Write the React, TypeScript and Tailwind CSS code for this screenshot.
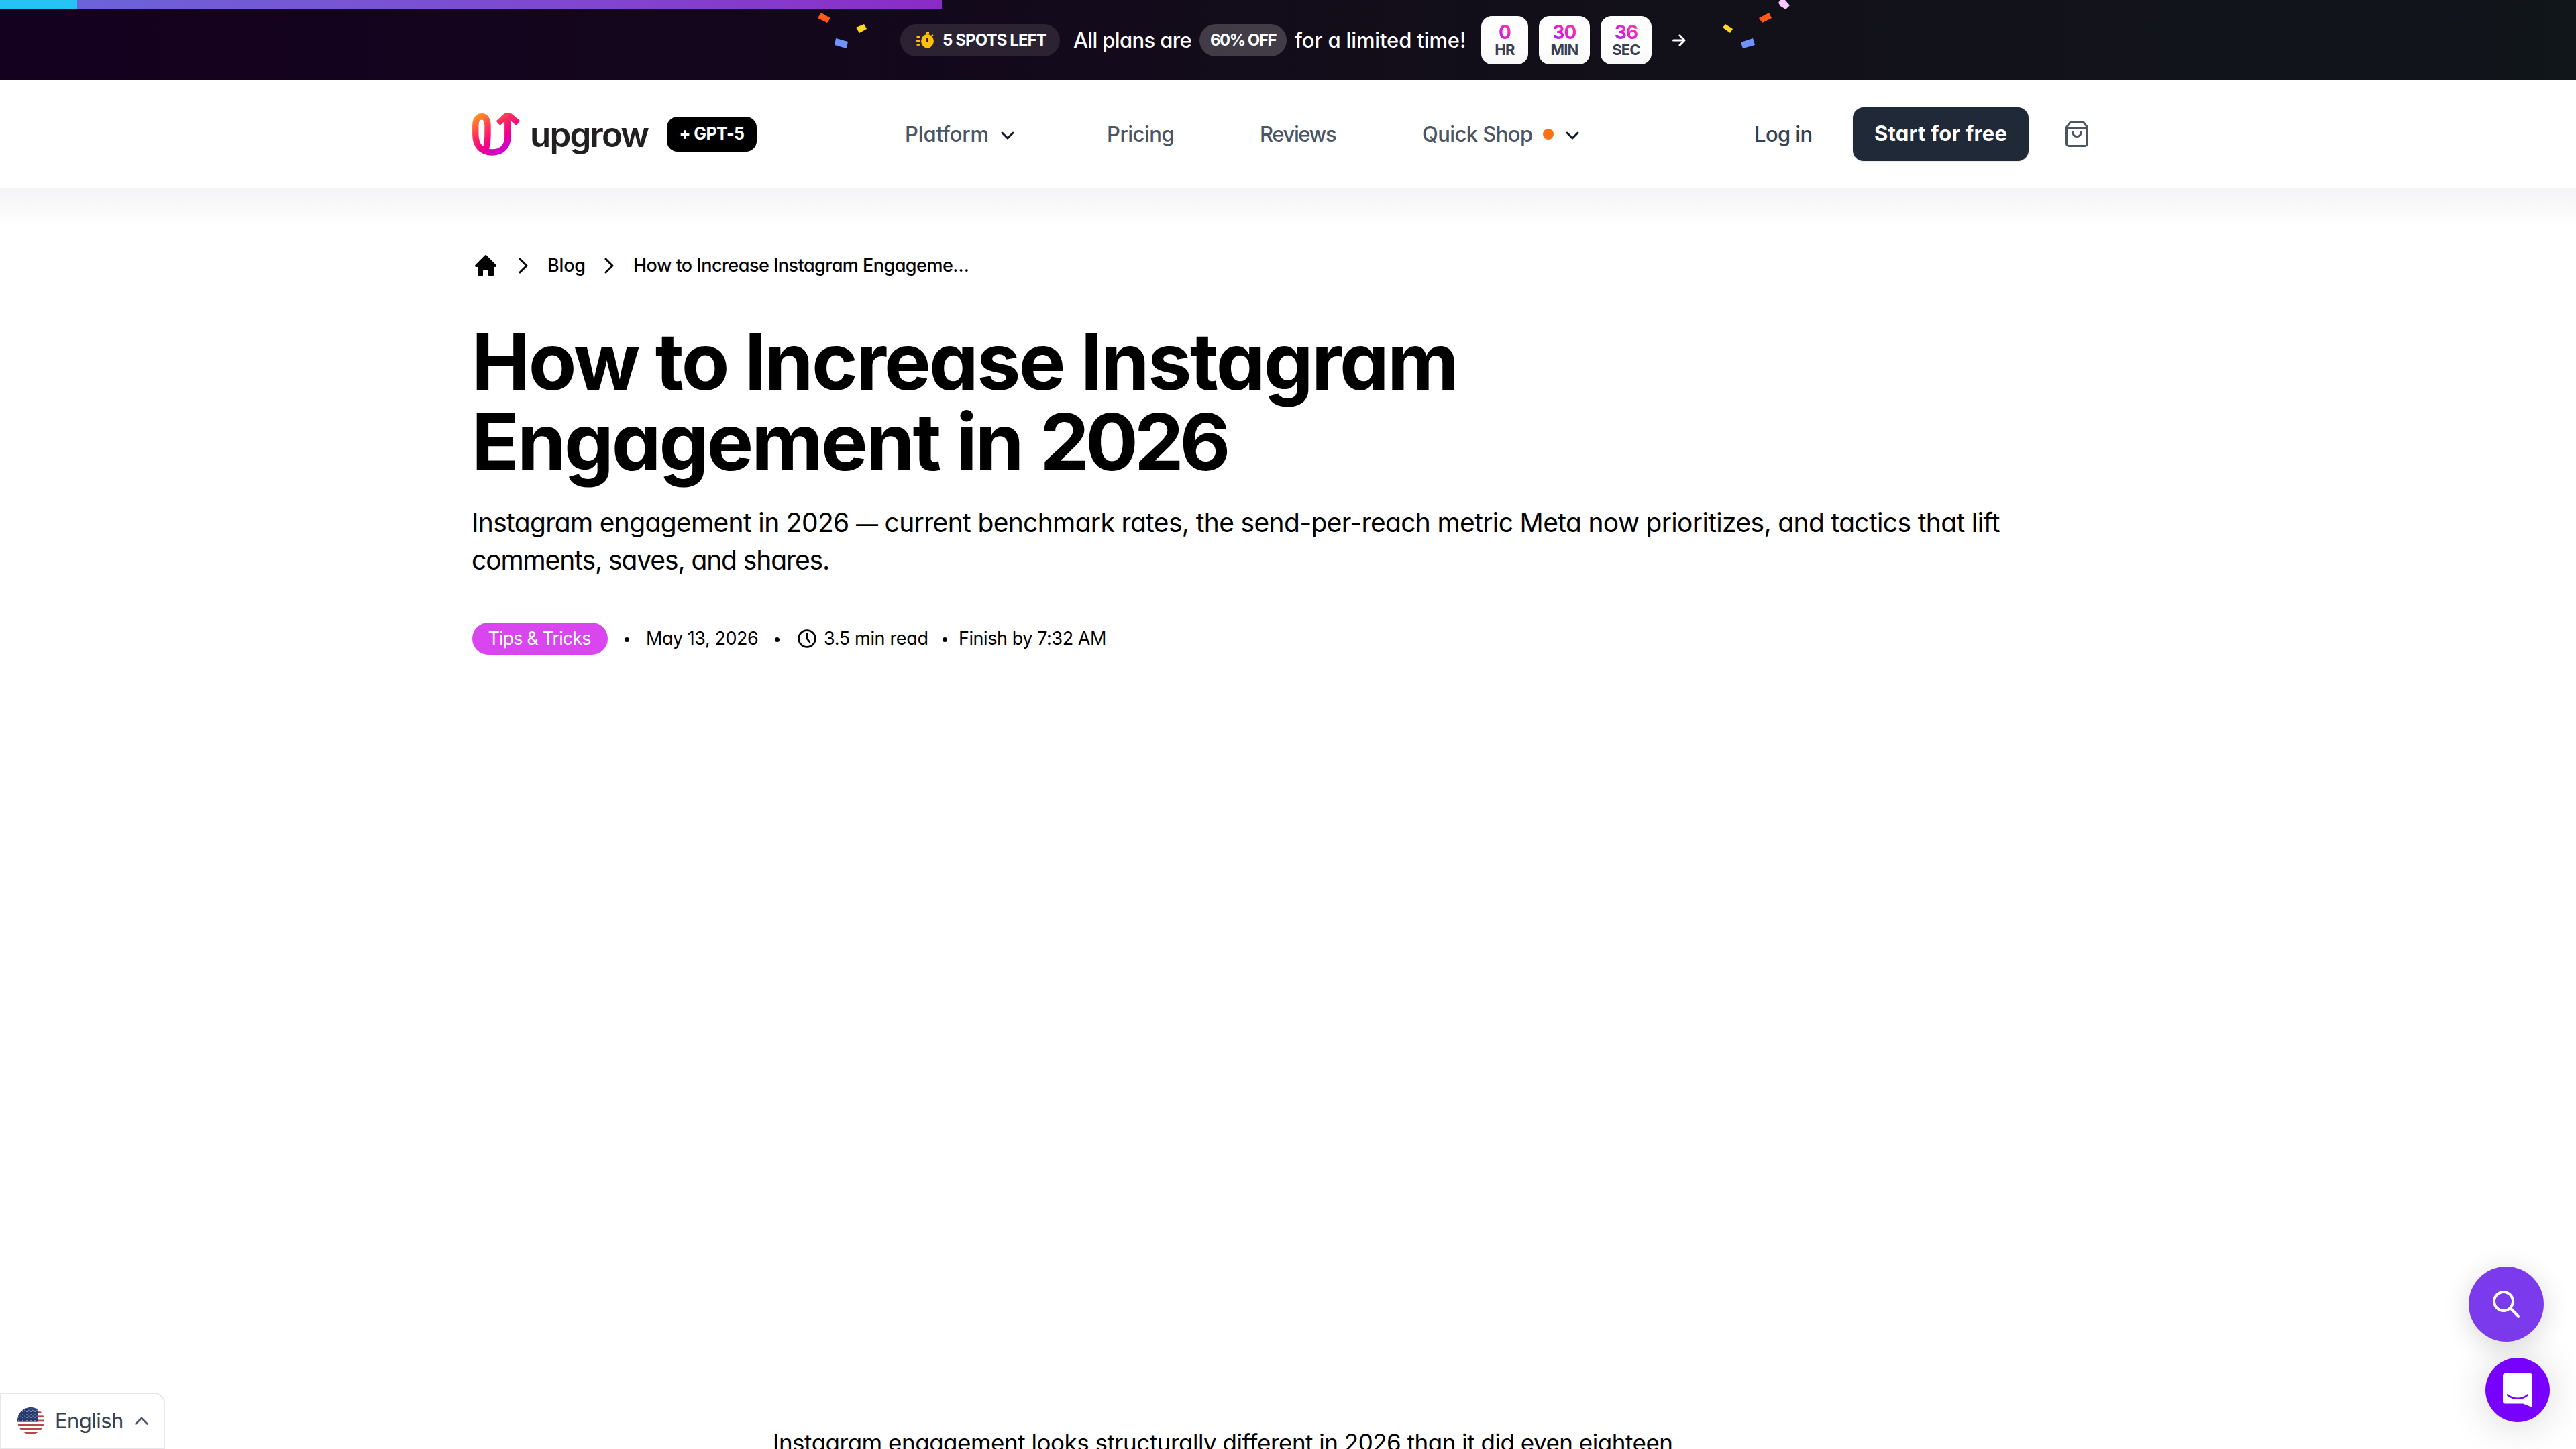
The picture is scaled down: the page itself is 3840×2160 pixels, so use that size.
import { clsx } from 'clsx';

interface ChevronProps {
  className?: string;
}

const COUNTDOWN = [
  { value: '0', label: 'HR', box: 'w-[70px]' },
  { value: '30', label: 'MIN', box: 'w-[76px]' },
  { value: '36', label: 'SEC', box: 'w-[76px]' },
];

/* Confetti pieces scattered on both sides of the promo text */
const CONFETTI = [
  { points: '1224,19 1238,27 1233,34 1219,27', color: '#ff5a1a' },
  { points: '1276,41 1288,36 1292,43 1281,49', color: '#ffd91f' },
  { points: '1246,57 1264,62 1262,72 1244,67', color: '#6f93ff' },
  { points: '2627,34 2641,27 2637,19 2622,27', color: '#ff5a1a' },
  { points: '2568,41 2572,36 2583,43 2579,49', color: '#ffd91f' },
  { points: '2595,63 2613,57 2616,67 2598,72', color: '#6f93ff' },
  { points: '2651,4 2654,0 2661,0 2668,8 2662,14 2654,9', color: '#fbc8ff' },
];

function ChevronDown({ className }: ChevronProps) {
  return (
    <svg viewBox="0 0 20 12" className={clsx('h-3 w-5 shrink-0', className)} fill="none" stroke="#111827" strokeWidth="3" strokeLinecap="round" strokeLinejoin="round">
      <path d="M2 2l8 8 8-8" />
    </svg>
  );
}

function ChevronRight() {
  return (
    <svg viewBox="0 0 14 24" className="h-6 w-3.5 shrink-0" fill="none" stroke="black" strokeWidth="3" strokeLinecap="round" strokeLinejoin="round">
      <path d="M2 2l10 10L2 22" />
    </svg>
  );
}

function StopwatchIcon() {
  return (
    <svg viewBox="0 0 28 24" className="h-6 w-7 shrink-0">
      <g fill="#fcbf08">
        <rect x="15" y="0" width="5" height="3" />
        <path d="M22.5 5.5l2.5-2.6 1.6 1.6-2.2 2.5z" />
        <ellipse cx="17.5" cy="13.3" rx="9.4" ry="10.2" />
        <rect x="1.5" y="6" width="5" height="2.8" />
        <rect x="0" y="11.5" width="6" height="2.8" />
        <rect x="1.5" y="17" width="5" height="2.8" />
      </g>
      <rect x="16.1" y="8" width="2.6" height="6.5" fill="#2b1f33" />
    </svg>
  );
}

function LogoMark() {
  return (
    <svg viewBox="0 0 72 64" className="h-16 w-[72px] shrink-0" fill="none">
      <defs>
        <linearGradient id="logo" gradientUnits="userSpaceOnUse" x1="6" y1="2" x2="44" y2="62">
          <stop offset="0" stopColor="#ff9c1a" />
          <stop offset="0.4" stopColor="#ff2d5e" />
          <stop offset="0.68" stopColor="#f0008a" />
          <stop offset="1" stopColor="#c800e0" />
        </linearGradient>
      </defs>
      <g stroke="url(#logo)" strokeWidth="9.4">
        <path d="M19 58C22 50 23 42 23 32V19C23 10.5 19.5 5.8 14 5.8C8.5 5.8 4.8 10.5 4.8 19V32C4.8 47 12 59 30 59C46 59 52.8 48 52.8 36V5" />
        <path d="M38.5 15.7L50 5.2Q53 3.6 56 5.2L68.4 15.7" strokeWidth="8.8" />
      </g>
    </svg>
  );
}

function HomeIcon() {
  return (
    <svg viewBox="0 0 32 32" className="h-8 w-8 shrink-0" fill="black">
      <path d="M14.6.7a2 2 0 0 1 2.8 0l14 14a2 2 0 0 1-1.4 3.4h-2V30a2 2 0 0 1-2 2h-4a2 2 0 0 1-2-2v-6a2 2 0 0 0-2-2h-4a2 2 0 0 0-2 2v6a2 2 0 0 1-2 2H6a2 2 0 0 1-2-2V18.1H2A2 2 0 0 1 .6 14.7z" />
    </svg>
  );
}

function BagIcon() {
  return (
    <svg viewBox="0 0 36 40" className="h-10 w-9 shrink-0" fill="none" stroke="#4b5563" strokeWidth="3" strokeLinecap="round" strokeLinejoin="round">
      <path d="M8 2.5h20l5.5 7V34a3.5 3.5 0 0 1-3.5 3.5H6A3.5 3.5 0 0 1 2.5 34V9.5z" />
      <path d="M2.5 10.5h31M11.5 16.5a6.5 7 0 0 0 13 0" />
    </svg>
  );
}

function ClockIcon() {
  return (
    <svg viewBox="0 0 28 28" className="h-7 w-7 shrink-0" fill="none" stroke="black" strokeWidth="2.6" strokeLinecap="round">
      <circle cx="14" cy="14" r="12.4" />
      <path d="M14 7v7l4 5" />
    </svg>
  );
}

function UsFlag() {
  const stripes = Array.from({ length: 13 }, (_, i) => i);
  const stars = Array.from({ length: 45 }, (_, i) => i);
  return (
    <svg viewBox="0 0 40 40" className="h-10 w-10 shrink-0 rounded-full">
      {stripes.map((i) => (
        <rect key={i} y={i * 3.08} width="40" height="3.1" fill={i % 2 ? '#ffffff' : '#b0484f'} />
      ))}
      <rect width="30.5" height="21.5" fill="#25396f" />
      {stars.map((i) => (
        <circle key={i} cx={2 + (i % 5) * 6 + (Math.floor(i / 5) % 2) * 3} cy={2 + Math.floor(i / 5) * 2.2} r="0.6" fill="#dfe4f2" />
      ))}
    </svg>
  );
}

function PromoBanner() {
  return (
    <div className="relative h-[120px] overflow-hidden bg-gradient-to-r from-[#14001f] via-[#120f19] via-60% to-[#11161b]">
      <svg viewBox="0 0 3840 120" className="absolute inset-0 h-[120px] w-[3840px]">
        {CONFETTI.map((piece) => (
          <polygon key={piece.points} points={piece.points} fill={piece.color} />
        ))}
      </svg>

      {/* Reading progress */}
      <div className="absolute top-0 left-0 flex h-3.5 w-[1404px]">
        <div className="w-[115px] bg-[#25c4f5]" />
        <div className="flex-1 bg-gradient-to-r from-[#6b63d9] to-[#8a2bc6]" />
      </div>

      <div className="relative flex h-[120px] items-center pl-[1342px] text-[31px] font-medium whitespace-nowrap text-white">
        <div className="flex h-12 w-[238px] items-center rounded-full bg-white/10 pl-[23px] text-2xl font-bold tracking-[-0.9px]">
          <StopwatchIcon />
          <span className="ml-3">5 SPOTS LEFT</span>
        </div>
        <span className="ml-5 w-[188px] tracking-[-0.64px]">All plans are</span>
        <span className="h-12 w-[130px] rounded-full bg-white/20 pl-4 text-2xl leading-12 font-bold tracking-[-1.5px]">60% OFF</span>
        <span className="ml-3 w-[278px] tracking-[-0.13px]">for a limited time!</span>
        <div className="flex gap-4">
          {COUNTDOWN.map((unit) => (
            <div key={unit.label} className={clsx('flex h-[72px] flex-col items-center rounded-2xl bg-gradient-to-b from-white from-60% to-[#f7f7f8] pt-[10px] font-bold', unit.box)}>
              <span className="bg-gradient-to-tr from-[#8a12f5] via-[#e516d8] via-45% to-[#ff3a8c] bg-clip-text px-0.5 text-[28px] leading-[28px] tracking-[-1px] text-transparent">{unit.value}</span>
              <span className="text-[22px] leading-[25px] tracking-[-0.8px] text-[#374151]">{unit.label}</span>
            </div>
          ))}
        </div>
        <svg viewBox="0 0 20 18" className="ml-[31px] h-[18px] w-5" fill="none" stroke="white" strokeWidth="3" strokeLinecap="round" strokeLinejoin="round">
          <path d="M1.5 9h16M11 1.8L18 9l-7 7.2" />
        </svg>
      </div>
    </div>
  );
}

function NavBar() {
  return (
    <header className="flex h-40 items-center bg-white px-[704px] text-[31px] font-medium whitespace-nowrap text-[#4b5563]">
      <LogoMark />
      <span className="ml-[14px] w-[204px] text-[51px] leading-none font-semibold tracking-[-1.8px] text-[#211f20]">upgrow</span>
      <span className="h-[52px] w-[134px] rounded-2xl bg-black text-center text-[25px] leading-[50px] font-bold tracking-[-0.57px] text-white">+ GPT-5</span>

      <nav className="ml-[221px] flex items-center">
        <a className="flex w-[301px] items-center">
          <span className="w-[143px] tracking-[-0.16px]">Platform</span>
          <ChevronDown className="mt-1" />
        </a>
        <a className="w-[228px] tracking-[-0.49px]">Pricing</a>
        <a className="w-[242px] tracking-[-1.4px]">Reviews</a>
        <a className="flex w-[495px] items-center">
          <span className="w-[180px] tracking-[-0.58px]">Quick Shop</span>
          <span className="h-4 w-4 rounded-full bg-[#f97316]" />
          <ChevronDown className="mt-1 ml-[18px]" />
        </a>
      </nav>

      <a className="w-[147px] tracking-[-0.61px] text-[#374151]">Log in</a>
      <button className="h-20 w-[262px] shrink-0 rounded-2xl bg-[#1f2937] pb-0.5 text-center font-bold tracking-[0.26px] text-white shadow-sm">Start for free</button>
      <span className="ml-[54px]">
        <BagIcon />
      </span>
    </header>
  );
}

function Breadcrumbs() {
  return (
    <div className="flex h-10 items-center pl-1 text-[27px] font-medium whitespace-nowrap">
      <HomeIcon />
      <span className="ml-[33px] flex w-[43px]">
        <ChevronRight />
      </span>
      <span className="w-[85px] tracking-[-0.2px]">Blog</span>
      <span className="flex w-[43px]">
        <ChevronRight />
      </span>
      <span className="tracking-[-0.52px]">How to Increase Instagram Engageme…</span>
    </div>
  );
}

function ArticleMeta() {
  return (
    <div className="mt-[65px] flex h-12 items-center text-[27px] whitespace-nowrap">
      <span className="h-12 w-[202px] rounded-full bg-[#d946ef] pr-0.5 text-center leading-12 tracking-[-0.9px] text-white">Tips &amp; Tricks</span>
      <span className="mt-0.5 ml-[25px] h-[7px] w-[7px] rounded-full bg-black" />
      <span className="ml-[25px] w-[192px] tracking-[-0.46px]">May 13, 2026</span>
      <span className="mt-0.5 h-[7px] w-[7px] rounded-full bg-black" />
      <span className="ml-[27px] flex items-center">
        <ClockIcon />
      </span>
      <span className="ml-[11px] w-[177px] tracking-[-0.34px]">3.5 min read</span>
      <span className="mt-0.5 h-[7px] w-[7px] rounded-full bg-black" />
      <span className="ml-[17px] tracking-[-0.44px]">Finish by 7:32 AM</span>
    </div>
  );
}

function LanguagePicker() {
  return (
    <div className="absolute bottom-0 left-0 flex h-[84px] w-[246px] items-center rounded-tr-2xl border-2 border-[#e5e7eb] bg-white pl-6 text-[31px] text-[#374151]">
      <UsFlag />
      <span className="ml-4 w-[119px] tracking-[-0.56px]">English</span>
      <svg viewBox="0 0 20 12" className="h-3 w-5" fill="none" stroke="#4b5563" strokeWidth="2.6" strokeLinecap="round" strokeLinejoin="round">
        <path d="M1.5 10.5L10 2l8.5 8.5" />
      </svg>
    </div>
  );
}

function FloatingButtons() {
  return (
    <>
      <button className="absolute top-[1888px] left-[3680px] h-28 w-28 rounded-full bg-[#7c3aed] shadow-[0_8px_40px_rgba(0,0,0,0.16)]">
        <svg viewBox="0 0 112 112" fill="none" stroke="white" strokeWidth="4" strokeLinecap="round">
          <circle cx="52" cy="52" r="14" />
          <path d="M62.5 62.5l11.5 11.5" />
        </svg>
      </button>
      <button className="absolute top-[2024px] left-[3705px] h-24 w-24 rounded-full bg-[#7700ff] shadow-[0_4px_60px_rgba(0,0,0,0.16)]">
        <svg viewBox="0 0 96 96">
          <path d="M29.5 23h37a3.5 3.5 0 0 1 3.5 3.5V74l-14-5.5H29.5a3.5 3.5 0 0 1-3.5-3.5V26.5a3.5 3.5 0 0 1 3.5-3.5z" fill="white" />
          <path d="M33 55.5c9 7 21 7 30 0" fill="none" stroke="#7700ff" strokeWidth="2.6" strokeLinecap="round" />
        </svg>
      </button>
    </>
  );
}

export default function App() {
  return (
    <div className="relative h-[2160px] w-[3840px] overflow-hidden bg-white font-['Inter','Liberation_Sans',sans-serif] text-black [font-feature-settings:'cv11']">
      <PromoBanner />
      <NavBar />
      <div className="h-[60px] bg-gradient-to-b from-[#f4f4f6] to-white" />

      <main className="px-[704px] pt-9">
        <Breadcrumbs />
        <h1 className="mt-[63px] -ml-px text-[117px] leading-[120px] font-bold whitespace-nowrap">
          <span className="block tracking-[-2.74px]">How to Increase Instagram</span>
          <span className="block tracking-[-3px]">
            Engagement in <span className="ml-0.5 tracking-[-6px]">2026</span>
          </span>
        </h1>
        <p className="mt-[32px] -ml-px text-[39px] leading-14 whitespace-nowrap">
          <span className="block tracking-[-0.66px]">
            Instagram engagement in 2026 <span className="text-[33px] leading-none">—</span> current benchmark rates, the send-per-reach metric Meta now prioritizes, and tactics that lift
          </span>
          <span className="block tracking-[-1.1px]">comments, saves, and shares.</span>
        </p>
        <ArticleMeta />

        <article className="mt-[1146px] ml-[448px] text-[35px] leading-14 tracking-[-0.5px] whitespace-nowrap">
          Instagram engagement looks structurally different in 2026 than it did even eighteen
        </article>
      </main>

      <LanguagePicker />
      <FloatingButtons />
    </div>
  );
}
